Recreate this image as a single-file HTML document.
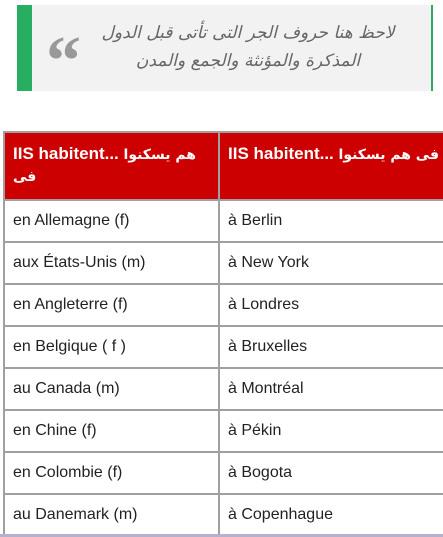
<html><head><style>
body{margin:0;width:443px;height:537px;overflow:hidden;background:#fff;font-family:"Liberation Sans",Arial,sans-serif;position:relative}
.bq{position:absolute;left:17px;top:5px;width:399px;height:86px;background:#f2f2f2;border-left:15px solid #27ae60;border-right:2px solid #27ae60}
.q{position:absolute;left:14px;top:22px;font-family:"Liberation Serif",serif;font-size:70px;color:#999;font-weight:bold;line-height:1;font-style:normal}
.ar{position:absolute;left:55px;right:22px;top:14px;direction:rtl;text-align:center;font-family:"DejaVu Sans",sans-serif;font-style:italic;font-size:17px;line-height:28px;color:#666}
table{position:absolute;left:3px;top:131px;border-collapse:collapse;width:445px}
td{border:2px solid #a0a0a0;height:42px;padding:0 0 0 8px;font-size:16px;color:#222;vertical-align:middle;box-sizing:border-box}
td:first-child{width:215px}
th{background:#cc0000;color:#fff;font-size:17px;font-weight:bold;text-align:left;vertical-align:top;height:68px;box-sizing:border-box;padding:10px 4px 0 8px;border:2px solid #a0a0a0;line-height:22px}
th span{font-size:14px;font-family:"DejaVu Sans",sans-serif}
.bot{position:absolute;left:0;top:534px;width:443px;height:3px;background:#b8b0cc}
</style></head><body>
<div class="bq"><div class="q">“</div><div class="ar">لاحظ هنا حروف الجر التى تأتى قبل الدول<br>المذكرة والمؤنثة والجمع والمدن</div></div>
<table>
<tr><th>IIS habitent... <span>هم يسكنوا</span><br><span>فى</span></th><th>IIS habitent... <span>فى</span> <span>هم يسكنوا</span></th></tr>
<tr><td>en Allemagne (f)</td><td>à Berlin</td></tr>
<tr><td>aux États-Unis (m)</td><td>à New York</td></tr>
<tr><td>en Angleterre (f)</td><td>à Londres</td></tr>
<tr><td>en Belgique ( f )</td><td>à Bruxelles</td></tr>
<tr><td>au Canada (m)</td><td>à Montréal</td></tr>
<tr><td>en Chine (f)</td><td>à Pékin</td></tr>
<tr><td>en Colombie (f)</td><td>à Bogota</td></tr>
<tr><td>au Danemark (m)</td><td>à Copenhague</td></tr>
</table>
<div class="bot"></div>
</body></html>
